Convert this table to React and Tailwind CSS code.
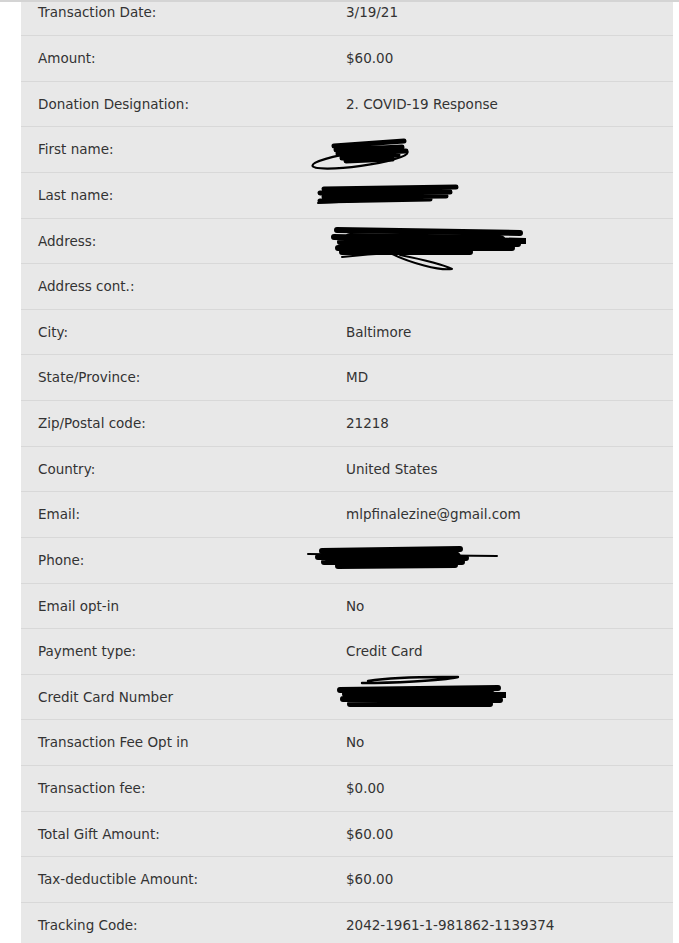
const rows = [
  { label: "Transaction Date:", value: "3/19/21" },
  { label: "Amount:", value: "$60.00" },
  { label: "Donation Designation:", value: "2. COVID-19 Response" },
  { label: "First name:", scribble: "first" },
  { label: "Last name:", scribble: "last" },
  { label: "Address:", scribble: "address" },
  { label: "Address cont.:", value: "" },
  { label: "City:", value: "Baltimore" },
  { label: "State/Province:", value: "MD" },
  { label: "Zip/Postal code:", value: "21218" },
  { label: "Country:", value: "United States" },
  { label: "Email:", value: "mlpfinalezine@gmail.com" },
  { label: "Phone:", scribble: "phone" },
  { label: "Email opt-in", value: "No" },
  { label: "Payment type:", value: "Credit Card" },
  { label: "Credit Card Number", scribble: "card" },
  { label: "Transaction Fee Opt in", value: "No" },
  { label: "Transaction fee:", value: "$0.00" },
  { label: "Total Gift Amount:", value: "$60.00" },
  { label: "Tax-deductible Amount:", value: "$60.00" },
  { label: "Tracking Code:", value: "2042-1961-1-981862-1139374" },
];

// row heights alternate to land dividers on whole pixels
const heights = [46, 46, 45, 46, 46, 45, 46, 45, 46, 46, 45, 46, 46, 45, 46, 45, 46, 46, 45, 46, 46];

// scribbles drawn in page coords, offset so (0,0) is the value cell's top-left
function Scribble({ kind }) {
  const common = { fill: "none", stroke: "#000", strokeLinecap: "round", strokeLinejoin: "round" };
  if (kind === "first") {
    return (
      <svg className="absolute left-[-40px] top-0" width="110" height="50" viewBox="306 127 110 50">
        <ellipse cx="360" cy="159" rx="48" ry="7" transform="rotate(-8 360 159)" {...common} strokeWidth="2.2" />
        <path d="M334 146 L404 141 M336 150 L402 147 M338 154 L406 151 M342 158 L398 155 M346 161 L392 159" {...common} strokeWidth="5" />
      </svg>
    );
  }
  if (kind === "last") {
    return (
      <svg className="absolute left-[-40px] top-0" width="160" height="45" viewBox="306 172 160 45">
        <path d="M324 188 L456 186 M320 192 L450 191 M324 196 L446 195 M320 200 L430 198" {...common} strokeWidth="5" />
        <path d="M330 196 L420 195" {...common} strokeWidth="8" />
        <path d="M318 202 L360 200" {...common} strokeWidth="2" />
      </svg>
    );
  }
  if (kind === "address") {
    return (
      <svg className="absolute left-[-40px] top-0" width="220" height="55" viewBox="306 218 220 55">
        <path d="M337 229 L520 232 M334 236 L528 240 M340 241 L518 243 M338 247 L512 247 M342 251 L470 251" {...common} strokeWidth="6" />
        <path d="M350 238 L500 240" {...common} strokeWidth="12" />
        <path d="M342 256 C380 252 420 250 450 252 M390 252 C410 262 440 270 452 268 C440 262 420 258 400 254" {...common} strokeWidth="2" />
      </svg>
    );
  }
  if (kind === "phone") {
    return (
      <svg className="absolute left-[-40px] top-0" width="200" height="45" viewBox="306 537 200 45">
        <path d="M308 553 L497 555" {...common} strokeWidth="2" />
        <path d="M322 550 L460 548 M318 556 L466 557 M324 561 L462 561 M338 565 L455 564" {...common} strokeWidth="6" />
        <path d="M330 556 L455 556" {...common} strokeWidth="12" />
      </svg>
    );
  }
  return (
    <svg className="absolute left-[-40px] top-0" width="200" height="45" viewBox="306 674 200 45">
      <path d="M368 680 C400 675 440 676 458 676 C440 680 390 682 362 682" {...common} strokeWidth="2.4" />
      <path d="M340 689 L498 687 M345 693 L505 694 M343 698 L500 699 M350 703 L490 703" {...common} strokeWidth="6" />
      <path d="M355 694 L490 695" {...common} strokeWidth="12" />
      <path d="M480 695 L512 695" {...common} strokeWidth="2" />
    </svg>
  );
}

export default function App() {
  return (
    <div className="h-[943px] overflow-hidden border-t-2 border-[#d4d4d4] bg-white font-['DejaVu_Sans',Verdana,sans-serif] text-[13.5px] text-[#333]">
      <div className="-mt-[12px] ml-[21px] w-[652px] bg-[#e8e8e8]">
        {rows.map((row, i) => (
          <div
            key={row.label}
            className="grid grid-cols-[325px_1fr] items-center border-b border-[#d8d8d8]"
            style={{ height: heights[i] }}
          >
            <div className="pl-[17px]">{row.label}</div>
            <div className="relative h-full flex items-center">
              {row.scribble ? <Scribble kind={row.scribble} /> : row.value}
            </div>
          </div>
        ))}
      </div>
    </div>
  );
}
